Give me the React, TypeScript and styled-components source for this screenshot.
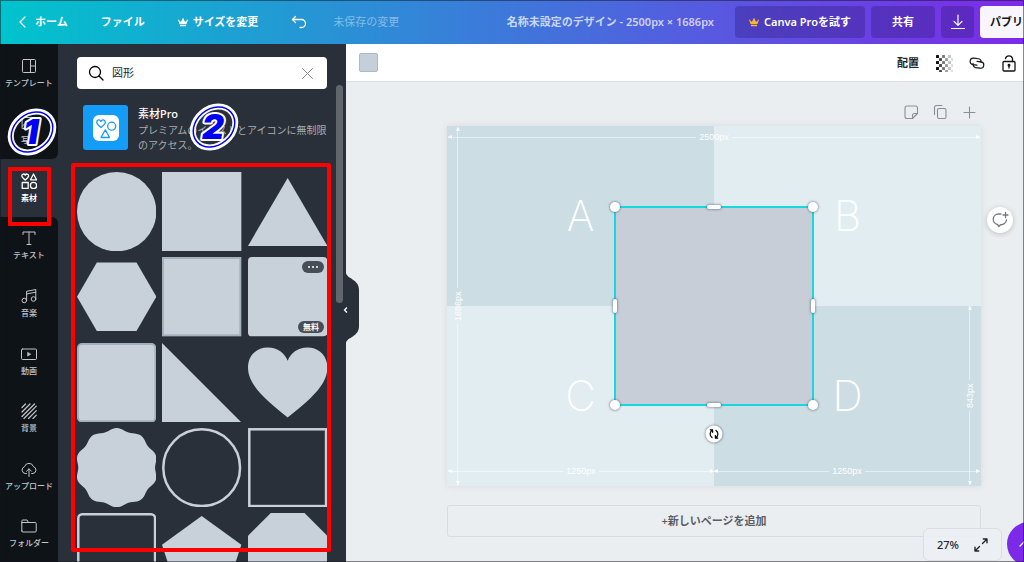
import React from "react";
import styled, { createGlobalStyle, css } from "styled-components";

const colors = {
  rail: "#0e1318",
  panel: "#293039",
  shape: "#c8d1da",
  shapeEdge: "#a3b0bc",
  canvas: "#ebeef1",
  line: "#dcdfe2",
  mark: "#ff0000",
  select: "#18d8df",
};

const GlobalStyle = createGlobalStyle`
  *, *::before, *::after { box-sizing: border-box; }
  body { margin: 0; }
  body, button, input {
    font-family: "Noto Sans", "Noto Sans CJK JP", sans-serif;
    font-size: 11px;
    line-height: 16px;
  }
  button { margin: 0; padding: 0; border: 0; background: none; color: inherit; cursor: pointer; }
  svg { display: block; flex: none; }
`;

const Shell = styled.div`
  position: relative;
  display: flex;
  flex-direction: column;
  height: 100vh;
  overflow: hidden;
  &::after {
    content: "";
    position: absolute;
    inset: 0;
    border: 1px solid rgba(20, 20, 30, 0.5);
    pointer-events: none;
    z-index: 9;
  }
`;

/* ---------- header ---------- */
const Header = styled.header`
  display: flex;
  align-items: center;
  flex: none;
  height: 44px;
  padding-left: 18px;
  color: #fff;
  background: linear-gradient(90deg, #00c4cc, #7d2ae8);
  white-space: nowrap;
`;
const HeaderNav = styled.nav`
  display: flex;
  align-items: center;
  gap: 33px;
`;
const HeaderLink = styled.button<{ $gap?: number }>`
  display: flex;
  align-items: center;
  gap: ${(p) => p.$gap ?? 0}px;
  font-weight: 700;
`;
const SaveState = styled.span`
  margin-left: 26px;
  color: rgba(255, 255, 255, 0.42);
`;
const DocTitle = styled.h1`
  margin: 0 21px 0 auto;
  font-size: 11px;
  line-height: 16px;
  font-weight: 600;
  color: rgba(255, 255, 255, 0.72);
`;
const Actions = styled.div`
  display: flex;
  gap: 6px;
`;
const ActionButton = styled.button<{ $w: number; $light?: boolean }>`
  display: flex;
  align-items: center;
  justify-content: center;
  gap: 5px;
  width: ${(p) => p.$w}px;
  height: 32px;
  border-radius: 4px;
  font-weight: 600;
  color: #fff;
  background: rgba(50, 30, 130, 0.38);
  ${(p) =>
    p.$light &&
    css`
      justify-content: flex-start;
      padding-left: 10px;
      border-radius: 4px 0 0 4px;
      color: #0e1318;
      background: #f8f5fd;
      font-weight: 700;
    `}
`;

/* ---------- left rail ---------- */
const Body = styled.div`
  display: flex;
  flex: 1;
  min-height: 0;
`;
const Rail = styled.nav`
  display: flex;
  flex-direction: column;
  flex: none;
  width: 58px;
  background: ${colors.panel};
`;
const RailItem = styled.button<{ $active?: boolean; $edge?: "before" | "after" }>`
  position: relative;
  display: flex;
  flex-direction: column;
  align-items: center;
  justify-content: center;
  gap: 4px;
  flex: 1 1 0;
  font-size: 8px;
  line-height: 10px;
  font-weight: ${(p) => (p.$active ? 700 : 500)};
  white-space: nowrap;
  color: ${(p) => (p.$active ? "#fff" : "#c3c6c8")};
  background: ${(p) => (p.$active ? colors.panel : colors.rail)};
  border-radius: ${(p) =>
    p.$edge === "before" ? "0 0 6px 0" : p.$edge === "after" ? "0 6px 0 0" : "0"};
  z-index: ${(p) => (p.$active ? 1 : 0)};
`;
const RailMark = styled.span`
  position: absolute;
  inset: 8px 7px -9px 8px;
  border: 4px solid ${colors.mark};
  border-radius: 1px;
`;
const Step = styled.svg<{ $x: number; $y: number }>`
  position: absolute;
  left: ${(p) => p.$x}px;
  top: ${(p) => p.$y}px;
  z-index: 3;
  pointer-events: none;
`;

/* ---------- element panel ---------- */
const Panel = styled.section`
  position: relative;
  flex: none;
  width: 288px;
  background: ${colors.panel};
  z-index: 2;
`;
const PanelInner = styled.div`
  display: flex;
  flex-direction: column;
  height: 100%;
  padding-top: 13px;
  overflow: hidden;
`;
const SearchBox = styled.label`
  display: flex;
  align-items: center;
  flex: none;
  gap: 8px;
  height: 32px;
  margin: 0 19px;
  padding: 0 13px 0 11px;
  border-radius: 4px;
  background: #fff;
`;
const SearchInput = styled.input`
  flex: 1;
  min-width: 0;
  padding: 0;
  border: 0;
  outline: 0;
  background: none;
  color: #22272c;
`;
const ClearButton = styled.button`
  && { color: #85898d; }
`;
const Promo = styled.a`
  display: flex;
  gap: 10px;
  flex: none;
  height: 58px;
  margin: 16px 17px 0 25px;
  text-decoration: none;
  color: #fff;
`;
const PromoArt = styled.span`
  display: grid;
  place-items: center;
  flex: none;
  width: 45px;
  height: 45px;
  border-radius: 3px;
  background: #139cf8;
`;
const PromoText = styled.span`
  display: flex;
  flex-direction: column;
  font-size: 10px;
  line-height: 15px;
  white-space: nowrap;
  color: #a9adb1;
`;
const PromoTitle = styled.strong`
  font-size: 11px;
  line-height: 18px;
  font-weight: 500;
  color: #fff;
`;
const Results = styled.div`
  position: relative;
  flex: 1;
  min-height: 0;
  margin: 0 15px 10px 13px;
  padding: 9px 4px 0 6px;
  &::after {
    content: "";
    position: absolute;
    inset: 0;
    border: 4px solid ${colors.mark};
    border-radius: 2px;
    pointer-events: none;
  }
`;
const ShapeGrid = styled.div`
  display: grid;
  grid-template-columns: repeat(3, 1fr);
  gap: 6px;
`;
const Tile = styled.button`
  position: relative;
  display: block;
  width: 100%;
  aspect-ratio: 1;
  svg { width: 100%; height: 100%; }
`;
const TileTag = styled.span<{ $bottom?: boolean }>`
  position: absolute;
  right: 3px;
  ${(p) => (p.$bottom ? "bottom: 4px;" : "top: 4px;")}
  display: flex;
  align-items: center;
  justify-content: center;
  gap: 2px;
  width: ${(p) => (p.$bottom ? 26 : 22)}px;
  height: 12px;
  border-radius: 6px;
  font-size: 8px;
  line-height: 12px;
  font-weight: 700;
  color: #fff;
  background: #484e55;
`;
const Dot = styled.i`
  width: 2px;
  height: 2px;
  border-radius: 1px;
  background: #fff;
`;
const ScrollThumb = styled.span`
  position: absolute;
  top: 41px;
  right: 3px;
  width: 7px;
  height: 218px;
  border-radius: 4px;
  background: #62676e;
`;
const CollapseTab = styled.button`
  position: absolute;
  left: 100%;
  top: 229px;
  width: 13px;
  height: 70px;
  svg { position: absolute; right: 0; top: 0; }
`;

/* ---------- editor ---------- */
const Editor = styled.main`
  position: relative;
  display: flex;
  flex-direction: column;
  flex: 1;
  min-width: 0;
  background: ${colors.canvas};
`;
const Toolbar = styled.div`
  display: flex;
  align-items: center;
  flex: none;
  gap: 16px;
  height: 38px;
  padding: 0 7px 0 13px;
  border-bottom: 1px solid ${colors.line};
  background: #fff;
  color: #0e1318;
`;
const Swatch = styled.button`
  width: 19px;
  height: 19px;
  margin-right: auto;
  border: 1px solid #aeb9c3;
  border-radius: 2px;
  background: #c5cfd9;
`;
const TextButton = styled.button`
  font-weight: 700;
  color: #22272c;
`;
const Workspace = styled.div`
  display: flex;
  flex-direction: column;
  padding: 22px 43px 0 101px;
`;
const PageTools = styled.div`
  display: flex;
  justify-content: flex-end;
  gap: 13px;
  padding: 0 4px 6px 0;
  color: #8a8f94;
`;
const Page = styled.div`
  position: relative;
  display: grid;
  grid-template-columns: 1fr 1fr;
  grid-template-rows: 1fr 1fr;
  aspect-ratio: 534 / 360;
  box-shadow: 0 0 6px rgba(60, 80, 100, 0.12);
`;
const Quadrant = styled.div<{ $dark?: boolean }>`
  display: grid;
  place-items: center;
  font-family: Inter, "Liberation Sans", sans-serif;
  font-size: 42px;
  line-height: 48px;
  font-weight: 200;
  color: #fff;
  background: ${(p) => (p.$dark ? "#cddde4" : "#e2edf2")};
`;
type Area = { $top?: string; $bottom?: string; $left?: string; $right?: string };
const Measure = styled.div<Area & { $vertical?: boolean }>`
  position: absolute;
  top: ${(p) => p.$top ?? "auto"};
  bottom: ${(p) => p.$bottom ?? "auto"};
  left: ${(p) => p.$left ?? "auto"};
  right: ${(p) => p.$right ?? "auto"};
  display: flex;
  align-items: center;
  gap: 3px;
  font-family: "Liberation Sans", sans-serif;
  font-size: 9px;
  line-height: 10px;
  color: #fff;
  ${(p) => p.$vertical && "writing-mode: vertical-rl; transform: rotate(180deg);"}
`;
const Rule = styled.i<{ $vertical?: boolean; $end?: boolean }>`
  position: relative;
  flex: 1;
  ${(p) => (p.$vertical ? "width" : "height")}: 1px;
  background: rgba(255, 255, 255, 0.5);
  &::after {
    content: "";
    position: absolute;
    border: 2px solid transparent;
    ${(p) =>
      p.$vertical
        ? p.$end
          ? "bottom: 0; left: -2px; border-width: 4px 2px 0; border-top-color: #fff;"
          : "top: 0; left: -2px; border-width: 0 2px 4px; border-bottom-color: #fff;"
        : p.$end
          ? "right: 0; top: -2px; border-width: 2px 0 2px 4px; border-left-color: #fff;"
          : "left: 0; top: -2px; border-width: 2px 4px 2px 0; border-right-color: #fff;"}
  }
`;
const SelectionLayer = styled.div`
  position: absolute;
  inset: 0;
  display: grid;
  place-items: center;
`;
const Selection = styled.div`
  position: relative;
  width: 198px;
  height: 198px;
  outline: 2px solid ${colors.select};
  outline-offset: -1px;
  background: #c7ced8;
`;
const handleSize = { corner: [10, 10], wide: [14, 4], tall: [4, 14], rotate: [17, 17] };
const Handle = styled.button<{ $kind: keyof typeof handleSize; $x: string; $y: string }>`
  position: absolute;
  left: ${(p) => p.$x};
  top: ${(p) => p.$y};
  z-index: 1;
  display: grid;
  place-items: center;
  width: ${(p) => handleSize[p.$kind][0]}px;
  height: ${(p) => handleSize[p.$kind][1]}px;
  transform: translate(-50%, -50%);
  border-radius: ${(p) => (p.$kind === "corner" || p.$kind === "rotate" ? "50%" : "2px")};
  background: #fff;
  box-shadow: 0 0 2px 1px rgba(60, 75, 90, 0.4);
`;
const AddPage = styled.button`
  height: 32px;
  margin-top: 19px;
  border: 1px solid #d9dcdf;
  border-radius: 3px;
  font-weight: 600;
  color: #5a5f64;
`;
const CommentButton = styled.button`
  position: absolute;
  right: 11px;
  top: 163px;
  display: grid;
  place-items: center;
  width: 26px;
  height: 26px;
  border-radius: 50%;
  background: #fff;
  box-shadow: 0 1px 5px rgba(40, 50, 60, 0.25);
  color: #74797e;
`;
const ZoomBar = styled.div`
  position: absolute;
  right: 22px;
  bottom: 1px;
  display: flex;
  align-items: center;
  gap: 15px;
  width: 79px;
  height: 33px;
  padding: 0 13px;
  border: 1px solid ${colors.line};
  border-radius: 6px;
  background: rgba(236, 239, 242, 0.94);
  color: #22272c;
  button { font-weight: 500; }
`;
const HelpButton = styled.button`
  position: absolute;
  right: -27px;
  bottom: -4px;
  width: 44px;
  height: 44px;
  padding-left: 12px;
  border-radius: 50%;
  color: #fff;
  background: #7d2ae8;
`;

/* ---------- icons ---------- */
type IconProps = { size?: number; h?: number; w?: number; children: React.ReactNode };
const Icon = ({ size = 16, h, w = 1, children }: IconProps) => (
  <svg
    width={size}
    height={h ?? size}
    viewBox={`0 0 ${size} ${h ?? size}`}
    fill="none"
    stroke="currentColor"
    strokeWidth={w}
    strokeLinecap="round"
    strokeLinejoin="round"
    aria-hidden="true"
  >
    {children}
  </svg>
);
const Crown = ({ color }: { color: string }) => (
  <svg width="10" height="9" viewBox="0 0 10 9" fill={color} aria-hidden="true">
    <path d="M1.6 6.3 0.3 2.4 2.9 3.8 4.6 1h.8l1.7 2.8 2.6-1.4-1.3 3.9zM2 7h6v1.3H2z" />
    <circle cx="5" cy="1" r=".8" />
    <circle cx=".8" cy="2.3" r=".7" />
    <circle cx="9.2" cy="2.3" r=".7" />
  </svg>
);

const railItems: { label: string; icon: React.ReactNode; active?: boolean; edge?: "before" | "after" }[] = [
  { label: "テンプレート", icon: <path d="M2.5 1.5h11a1 1 0 0 1 1 1v11a1 1 0 0 1-1 1h-11a1 1 0 0 1-1-1v-11a1 1 0 0 1 1-1zM9.5 1.5v13M9.5 8h5" /> },
  { label: "写真", edge: "before", icon: <path d="M1.5 2.5h13v11h-13zM1.5 11l4-4 6 6.5M10 8l4.5 4" /> },
  {
    label: "素材",
    active: true,
    icon: (
      <g strokeWidth="1.3">
        <path d="M4.2 7C2.5 5.6.8 4.3.8 2.7.8.7 3.3.5 4.2 2.1 5.1.5 7.6.7 7.6 2.7 7.6 4.3 5.9 5.6 4.2 7zM12.5 1 15.5 6.8h-6zM1.2 9.5h6v6h-6z" />
        <circle cx="12.5" cy="12.5" r="3.1" />
      </g>
    ),
  },
  { label: "テキスト", edge: "after", icon: <path d="M2 4.5v-2.5h12v2.5M8 2v12.5M6 14.5h4" /> },
  {
    label: "音楽",
    icon: (
      <>
        <circle cx="3.3" cy="12.5" r="2.3" />
        <circle cx="12.5" cy="11" r="2.3" />
        <path d="M5.600 12.5V3.3l9.2-1.8V11M5.6 6l9.2-1.8" />
      </>
    ),
  },
  { label: "動画", icon: <><rect x=".5" y="3" width="15" height="10.5" rx="1" /><path d="M6.5 6.3v4L9.8 8.3z" fill="currentColor" strokeWidth=".4" /></> },
  { label: "背景", icon: <path d="M1 4.5 4.5 1M1 9 9 1M1 13.5 13.5 1M3 15.5 15.3 3.2M7.5 15.5 15.3 7.7M12 15.5 15.3 12.2" strokeWidth="1.2" /> },
  { label: "アップロード", icon: <path d="M5.5 12.5H4.2A3.5 3.5 0 0 1 3.5 5.7 4.7 4.7 0 0 1 12.5 5.7 3.5 3.5 0 0 1 12 12.5H10.7M8 15.5V8M5.5 10.3 8 7.8l2.5 2.5" /> },
  { label: "フォルダー", icon: <path d="M.8 13V3a1 1 0 0 1 1-1H6l1.5 2.5h6.7a1 1 0 0 1 1 1V13a1 1 0 0 1-1 1H1.8a1 1 0 0 1-1-1zM.8 4.5h6.7" /> },
];

const StepBadge = ({ n, x, y }: { n: string; x: number; y: number }) => (
  <Step $x={x} $y={y} width="52" height="52" viewBox="0 0 52 52">
    <g fill="none" transform="rotate(-40 26 26)">
      <ellipse cx="26" cy="26" rx="23" ry="18.5" stroke="#fff" strokeWidth="6" />
      <ellipse cx="26" cy="26" rx="22.5" ry="18" stroke="#0000f5" strokeWidth="1.5" />
    </g>
    <text
      x="25"
      y="38"
      textAnchor="middle"
      fontFamily="Inter, Liberation Sans, sans-serif"
      fontSize="34"
      fontWeight="900"
      fontStyle="italic"
      fill="#0000f5"
      stroke="#fff"
      strokeWidth="4"
      strokeLinejoin="round"
      paintOrder="stroke"
    >
      {n}
    </text>
  </Step>
);

/* ten-lobed badge outline, widened so its side lobes reach the tile edges */
const scallop = Array.from({ length: 120 }, (_, i) => {
  const a = (i / 120) * Math.PI * 2;
  const r = 38.6 + 1.4 * Math.cos(10 * a);
  return `${(40 + r * 1.04 * Math.sin(a)).toFixed(2)},${(40 - r * Math.cos(a)).toFixed(2)}`;
}).join(" ");

const outline = { fill: "none", stroke: colors.shape, strokeWidth: 2.5 };
const edged = { stroke: colors.shapeEdge, strokeWidth: 2 };
const shapes: [string, React.ReactNode][] = [
  ["円", <circle cx="40" cy="40" r="40" />],
  ["正方形", <rect width="80" height="80" />],
  ["三角形", <path d="M40 6 80 74.5H0z" />],
  ["六角形", <path d="M20 5.5H60L80 40 60 74.5H20L0 40z" />],
  ["枠付き正方形", <rect x="1" y="1" width="78" height="78" {...edged} />],
  ["角丸正方形", <rect width="80" height="80" rx="4" />],
  ["枠付き角丸正方形", <rect x="1" y="1" width="78" height="78" rx="4" {...edged} />],
  ["直角三角形", <path d="M0 0 80 80H0z" />],
  ["ハート", <path d="M40 75C20 59 0 43 0 25 0 12 9 4.5 20 4.5 30 4.5 37 10 40 18 43 10 50 4.5 60 4.5 71 4.5 80 12 80 25 80 43 60 59 40 75z" />],
  ["バッジ", <polygon points={scallop} />],
  ["円の枠", <circle cx="40" cy="40" r="38.7" {...outline} />],
  ["正方形の枠", <rect x="1.3" y="1.3" width="77.4" height="77.4" {...outline} />],
  ["角丸の枠", <rect x="1.3" y="1.3" width="77.4" height="77.4" rx="4" {...outline} />],
  ["五角形", <path d="M40 3 80 32 65 78H15L0 32z" />],
  ["八角形", <path d="M23 0H57L80 23V57L57 80H23L0 57V23z" />],
];

const MeasureLine = ({ label, vertical, ...area }: Area & { label: string; vertical?: boolean }) => (
  <Measure $vertical={vertical} {...area}>
    <Rule $vertical={vertical} />
    <span>{label}</span>
    <Rule $vertical={vertical} $end />
  </Measure>
);

const checker = [0, 1, 2, 3, 4, 5].flatMap((c) =>
  [0, 1, 2, 3, 4, 5].filter((r) => (r + c) % 2 === 0).map((r) => ({ c, r })),
);

export default function App() {
  return (
    <Shell>
      <GlobalStyle />
      <Header>
        <HeaderNav>
          <HeaderLink $gap={9}>
            <Icon size={8} h={12} w={1.3}><path d="M7 1 2 6l5 5" /></Icon>
            ホーム
          </HeaderLink>
          <HeaderLink>ファイル</HeaderLink>
          <HeaderLink $gap={5}><Crown color="#fff" />サイズを変更</HeaderLink>
          <HeaderLink aria-label="元に戻す">
            <Icon size={16} h={14} w={1.3}><path d="M4.5 1.5 1.5 4.5l3 3M1.5 4.5H10.5a4 4 0 0 1 0 8H9" /></Icon>
          </HeaderLink>
        </HeaderNav>
        <SaveState>未保存の変更</SaveState>
        <DocTitle>名称未設定のデザイン - 2500px × 1686px</DocTitle>
        <Actions>
          <ActionButton $w={130}><Crown color="#fdb833" />Canva Proを試す</ActionButton>
          <ActionButton $w={64}>共有</ActionButton>
          <ActionButton $w={33} aria-label="ダウンロード">
            <Icon size={16} w={1.2}><path d="M8 1v10M4 7.3 8 11.3l4-4M1.5 14.5h13" /></Icon>
          </ActionButton>
          <ActionButton $w={44} $light>パブリ</ActionButton>
        </Actions>
      </Header>

      <Body>
        <Rail>
          {railItems.map((it) => (
            <RailItem key={it.label} $active={it.active} $edge={it.edge}>
              <Icon>{it.icon}</Icon>
              {it.label}
              {it.active && <RailMark />}
              {it.edge === "before" && <StepBadge n="1" x={6} y={4} />}
            </RailItem>
          ))}
        </Rail>

        <Panel>
          <PanelInner>
            <SearchBox>
              <Icon size={16} w={1.3}><circle cx="7" cy="7" r="5.5" /><path d="m11 11 4 4" /></Icon>
              <SearchInput aria-label="検索" defaultValue="図形" />
              <ClearButton aria-label="クリア">
                <Icon size={13}><path d="m1.5 1.5 10 10M11.5 1.5l-10 10" /></Icon>
              </ClearButton>
            </SearchBox>
            <Promo href="#pro">
              <PromoArt>
                <svg width="26" height="26" viewBox="0 0 26 26" fill="none" stroke="#139cf8" strokeWidth="1.3" strokeLinejoin="round">
                  <rect width="26" height="26" rx="6" fill="#fff" stroke="none" />
                  <path d="M8 12.5C5.5 10.5 3.7 9 3.7 7.2 3.7 4.5 7 4.2 8 6.4 9 4.2 12.3 4.5 12.3 7.2 12.3 9 10.5 10.5 8 12.5zM12.3 14.8 16.5 22.5H8z" />
                  <circle cx="18.7" cy="11.2" r="4" />
                </svg>
              </PromoArt>
              <PromoText>
                <PromoTitle>素材Pro</PromoTitle>
                <span>プレミアムのイラストとアイコンに無制限</span>
                <span>のアクセス。</span>
              </PromoText>
            </Promo>
            <Results>
              <ShapeGrid>
                {shapes.map(([name, art], i) => (
                  <Tile key={name} aria-label={name}>
                    <svg viewBox="0 0 80 80" fill={colors.shape}>{art}</svg>
                    {i === 5 && (
                      <>
                        <TileTag><Dot /><Dot /><Dot /></TileTag>
                        <TileTag $bottom>無料</TileTag>
                      </>
                    )}
                  </Tile>
                ))}
              </ShapeGrid>
            </Results>
          </PanelInner>
          <StepBadge n="2" x={130} y={57} />
          <ScrollThumb />
          <CollapseTab aria-label="パネルを閉じる">
            <svg width="16" height="70" viewBox="0 0 16 70">
              <path d="M0 0H3C4 6 16 6 16 17V53C16 64 4 64 3 70H0z" fill={colors.panel} />
              <path d="M4 34.5 1.5 37l2.5 2.5" fill="none" stroke="#fff" strokeWidth="1.3" />
            </svg>
          </CollapseTab>
        </Panel>

        <Editor>
          <Toolbar>
            <Swatch aria-label="カラー" />
            <TextButton>配置</TextButton>
            <button aria-label="透明度">
              <svg width="18" height="18" viewBox="0 0 18 18">
                {checker.map(({ c, r }) => (
                  <rect key={`${c}-${r}`} x={1 + c * 3} y={1 + r * 3} width="3" height="3" rx=".5" fill="#0e1318" opacity={[1, 0.75, 0.55, 0.4, 0.25, 0.15][c]} />
                ))}
              </svg>
            </button>
            <button aria-label="リンク">
              <Icon size={16} w={1.2}><path d="M8.2 10.2H4.2A3.3 3.3 0 0 1 4.2 3.6h4.6a3.3 3.3 0 0 1 3.2 3.3M7.8 6.3h4a3.2 3.2 0 0 1 0 6.4H7.2A3.2 3.2 0 0 1 4.2 9" transform="rotate(8 8 8)" /></Icon>
            </button>
            <button aria-label="ロック">
              <Icon size={16} h={18} w={1.3}><rect x="2" y="7.5" width="12" height="9.5" rx="1" /><path d="M4.5 4.7a3.6 3.6 0 0 1 7 0v2.8M8 11v3" /><circle cx="8" cy="11.3" r=".8" fill="currentColor" /></Icon>
            </button>
          </Toolbar>

          <Workspace>
            <PageTools>
              <button aria-label="メモ"><Icon w={1.1}><path d="M9.5 14.5H4a2 2 0 0 1-2-2V4a2 2 0 0 1 2-2h8.5a2 2 0 0 1 2 2v5.5zv-3a2 2 0 0 1 2-2h3" /></Icon></button>
              <button aria-label="複製"><Icon w={1.1}><rect x="5.5" y="4.5" width="8.5" height="10" rx="1.5" /><path d="M2.5 10.5V3.5a2 2 0 0 1 2-2H10" /></Icon></button>
              <button aria-label="追加"><Icon w={1.1}><path d="M8.5 3v11M3 8.5h11" /></Icon></button>
            </PageTools>
            <Page>
              <Quadrant $dark>A</Quadrant>
              <Quadrant>B</Quadrant>
              <Quadrant>C</Quadrant>
              <Quadrant $dark>D</Quadrant>
              <MeasureLine label="2500px" $top="6px" $left="1px" $right="1px" />
              <MeasureLine label="1686px" vertical $top="1px" $bottom="1px" $left="6px" />
              <MeasureLine label="843px" vertical $top="50%" $bottom="1px" $right="6px" />
              <MeasureLine label="1250px" $bottom="10px" $left="1px" $right="50%" />
              <MeasureLine label="1250px" $bottom="10px" $left="50%" $right="1px" />
              <SelectionLayer>
                <Selection>
                  <Handle aria-label="左上" $kind="corner" $x="0%" $y="0%" />
                  <Handle aria-label="右上" $kind="corner" $x="100%" $y="0%" />
                  <Handle aria-label="左下" $kind="corner" $x="0%" $y="100%" />
                  <Handle aria-label="右下" $kind="corner" $x="100%" $y="100%" />
                  <Handle aria-label="上" $kind="wide" $x="50%" $y="0%" />
                  <Handle aria-label="下" $kind="wide" $x="50%" $y="100%" />
                  <Handle aria-label="左" $kind="tall" $x="0%" $y="50%" />
                  <Handle aria-label="右" $kind="tall" $x="100%" $y="50%" />
                  <Handle aria-label="回転" $kind="rotate" $x="50%" $y="calc(100% + 29px)">
                    <Icon size={11} w={1.2}><path d="M3.8 1.8a4.3 4.3 0 0 0-.3 7.3M1.8 1.4h2.3v2.4M7.2 9.2a4.3 4.3 0 0 0 .3-7.3M9.2 9.6H6.9V7.2" /></Icon>
                  </Handle>
                </Selection>
              </SelectionLayer>
            </Page>
            <AddPage>+新しいページを追加</AddPage>
          </Workspace>

          <CommentButton aria-label="コメント">
            <Icon size={18} w={1.3}><path d="M10 3H7.5a5.3 5.3 0 0 0-1 10.5L8 15.5l1.5-1.8a5.5 5.5 0 0 0 6-4.7M14.5 1.5v5M12 4h5" /></Icon>
          </CommentButton>
          <ZoomBar>
            <button>27%</button>
            <button aria-label="全画面">
              <Icon size={14} w={1.4}><path d="M8.5 5.5 13 1M9.3 1H13v3.7M5.5 8.5 1 13M1 9.3V13h3.7" /></Icon>
            </button>
          </ZoomBar>
          <HelpButton aria-label="ヘルプ">
            <Icon size={12} w={1.3}><path d="m1 8 4-4 4 4" /></Icon>
          </HelpButton>
        </Editor>
      </Body>
    </Shell>
  );
}
